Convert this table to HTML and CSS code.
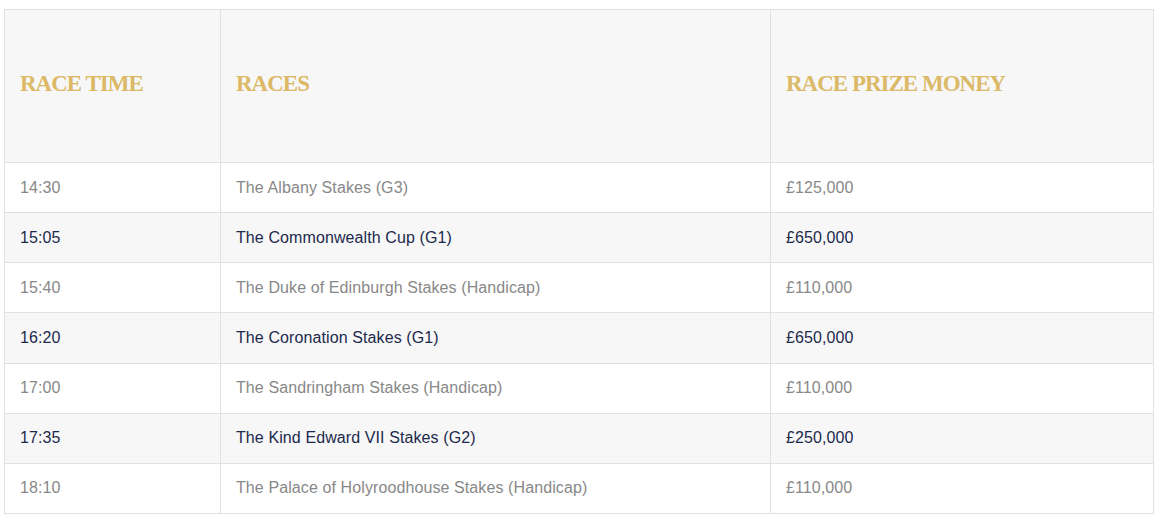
FILE: index.html
```html
<!DOCTYPE html>
<html lang="en">
<head>
<meta charset="utf-8">
<title>Race Schedule</title>
<link rel="stylesheet" href="styles.css">
</head>
<body>
<table class="races">
  <colgroup>
    <col class="col-time">
    <col class="col-race">
    <col class="col-prize">
  </colgroup>
  <thead>
    <tr>
      <th>RACE TIME</th>
      <th>RACES</th>
      <th>RACE PRIZE MONEY</th>
    </tr>
  </thead>
  <tbody>
    <tr class="odd"><td>14:30</td><td>The Albany Stakes (G3)</td><td>£125,000</td></tr>
    <tr class="even"><td>15:05</td><td>The Commonwealth Cup (G1)</td><td>£650,000</td></tr>
    <tr class="odd"><td>15:40</td><td>The Duke of Edinburgh Stakes (Handicap)</td><td>£110,000</td></tr>
    <tr class="even"><td>16:20</td><td>The Coronation Stakes (G1)</td><td>£650,000</td></tr>
    <tr class="odd"><td>17:00</td><td>The Sandringham Stakes (Handicap)</td><td>£110,000</td></tr>
    <tr class="even"><td>17:35</td><td>The Kind Edward VII Stakes (G2)</td><td>£250,000</td></tr>
    <tr class="odd"><td>18:10</td><td>The Palace of Holyroodhouse Stakes (Handicap)</td><td>£110,000</td></tr>
  </tbody>
</table>
</body>
</html>
```
FILE: styles.css
```css
html, body {
  background: #ffffff;
}
body {
  margin: 9px 0 0 4px;
  font-family: "Liberation Sans", Arial, sans-serif;
}
.races {
  width: 1150px;
  border-collapse: collapse;
  table-layout: fixed;
}
.col-time { width: 216px; }
.col-race { width: 550px; }
.col-prize { width: 383px; }
.races th,
.races td {
  border: 1px solid #e1e1e1;
  text-align: left;
  vertical-align: middle;
  padding: 0 15px;
}
.races th {
  background: #f7f7f7;
  height: 153px;
  padding-bottom: 4px;
  font-family: "Liberation Serif", "Times New Roman", serif;
  font-weight: bold;
  font-size: 23px;
  letter-spacing: -1px;
  color: #dbb967;
  box-sizing: border-box;
}
.races td {
  height: 50.15px;
  box-sizing: border-box;
  font-size: 16px;
  letter-spacing: 0.1px;
}
.odd td {
  background: #ffffff;
  color: #888888;
}
.even td {
  background: #f7f7f7;
  color: #1c2a4c;
}
```
